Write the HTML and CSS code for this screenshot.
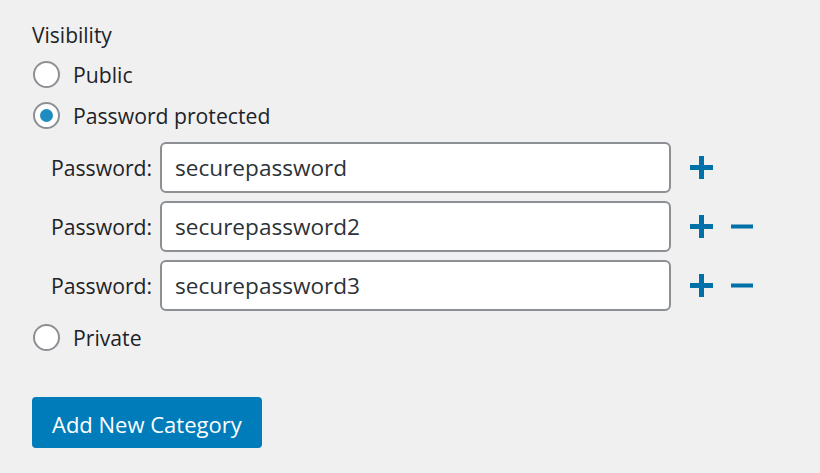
FILE: index.html
```html
<!DOCTYPE html>
<html lang="en">
<head>
<meta charset="utf-8">
<title>Visibility</title>
<link rel="stylesheet" href="styles.css">
</head>
<body>
<div class="panel">
  <div class="heading">Visibility</div>
  <label class="choice"><span class="radio"></span><span class="choice-text">Public</span></label>
  <label class="choice"><span class="radio checked"></span><span class="choice-text">Password protected</span></label>
  <div class="pw-list">
    <div class="pw-row">
      <span class="pw-label">Password:</span>
      <span class="pw-input">securepassword</span>
      <span class="icon-btn plus"><svg viewBox="0 0 24 24" width="24" height="24"><rect x="0" y="9" width="23" height="5"/><rect x="9" y="0" width="5" height="23"/></svg></span>
    </div>
    <div class="pw-row">
      <span class="pw-label">Password:</span>
      <span class="pw-input">securepassword2</span>
      <span class="icon-btn plus"><svg viewBox="0 0 24 24" width="24" height="24"><rect x="0" y="9" width="23" height="5"/><rect x="9" y="0" width="5" height="23"/></svg></span>
      <span class="icon-btn minus"><svg viewBox="0 0 24 24" width="24" height="24"><rect x="0" y="9.5" width="22" height="4"/></svg></span>
    </div>
    <div class="pw-row">
      <span class="pw-label">Password:</span>
      <span class="pw-input">securepassword3</span>
      <span class="icon-btn plus"><svg viewBox="0 0 24 24" width="24" height="24"><rect x="0" y="9" width="23" height="5"/><rect x="9" y="0" width="5" height="23"/></svg></span>
      <span class="icon-btn minus"><svg viewBox="0 0 24 24" width="24" height="24"><rect x="0" y="9.5" width="22" height="4"/></svg></span>
    </div>
  </div>
  <label class="choice private"><span class="radio"></span><span class="choice-text">Private</span></label>
  <button class="primary">Add New Category</button>
</div>
</body>
</html>
```
FILE: styles.css
```css
html, body {
  margin: 0;
  padding: 0;
  background: #f0f0f1;
}
body {
  font-family: "Open Sans", "Noto Sans", sans-serif;
  color: #1d2327;
  font-size: 21px;
}
.panel {
  padding: 20px 0 0 32px;
  display: flex;
  flex-direction: column;
  align-items: flex-start;
}
.heading {
  height: 30px;
  line-height: 30px;
}
.choice {
  display: flex;
  align-items: center;
  height: 38px;
  gap: 13px;
  font-size: 21.2px;
}
.heading + .choice { margin-top: 5px; }
.choice + .choice { margin-top: 3px; }
.radio {
  box-sizing: border-box;
  width: 27px;
  height: 27px;
  border: 2px solid #8c8f94;
  border-radius: 50%;
  background: #fff;
  display: flex;
  align-items: center;
  justify-content: center;
  margin-left: 1px;
}
.radio.checked::after {
  content: "";
  width: 13px;
  height: 13px;
  border-radius: 50%;
  background: #1e8cbe;
}
.pw-list {
  margin-top: 8px;
  display: flex;
  flex-direction: column;
  gap: 8px;
}
.pw-row {
  display: flex;
  align-items: center;
  height: 51px;
  padding-left: 19px;
}
.pw-label {
  width: 98px;
  margin-right: 11px;
  white-space: nowrap;
  font-size: 21.2px;
}
.pw-input {
  box-sizing: border-box;
  width: 511px;
  height: 51px;
  border: 2px solid #8c8f94;
  border-radius: 6px;
  background: #fff;
  padding: 0 13px;
  display: flex;
  align-items: center;
  font-size: 22.6px;
  color: #2c3338;
}
.icon-btn {
  display: flex;
  width: 24px;
  height: 24px;
  fill: #0071a8;
}
.icon-btn.plus { margin-left: 19px; }
.icon-btn.minus { margin-left: 17px; }
.choice.private { margin-top: 7px; }
.primary {
  margin-top: 41px;
  box-sizing: border-box;
  height: 51px;
  padding: 2px 20px 0;
  border: 0;
  border-radius: 4px;
  background: #007cba;
  color: #fff;
  font-family: inherit;
  font-size: 22px;
}
```
